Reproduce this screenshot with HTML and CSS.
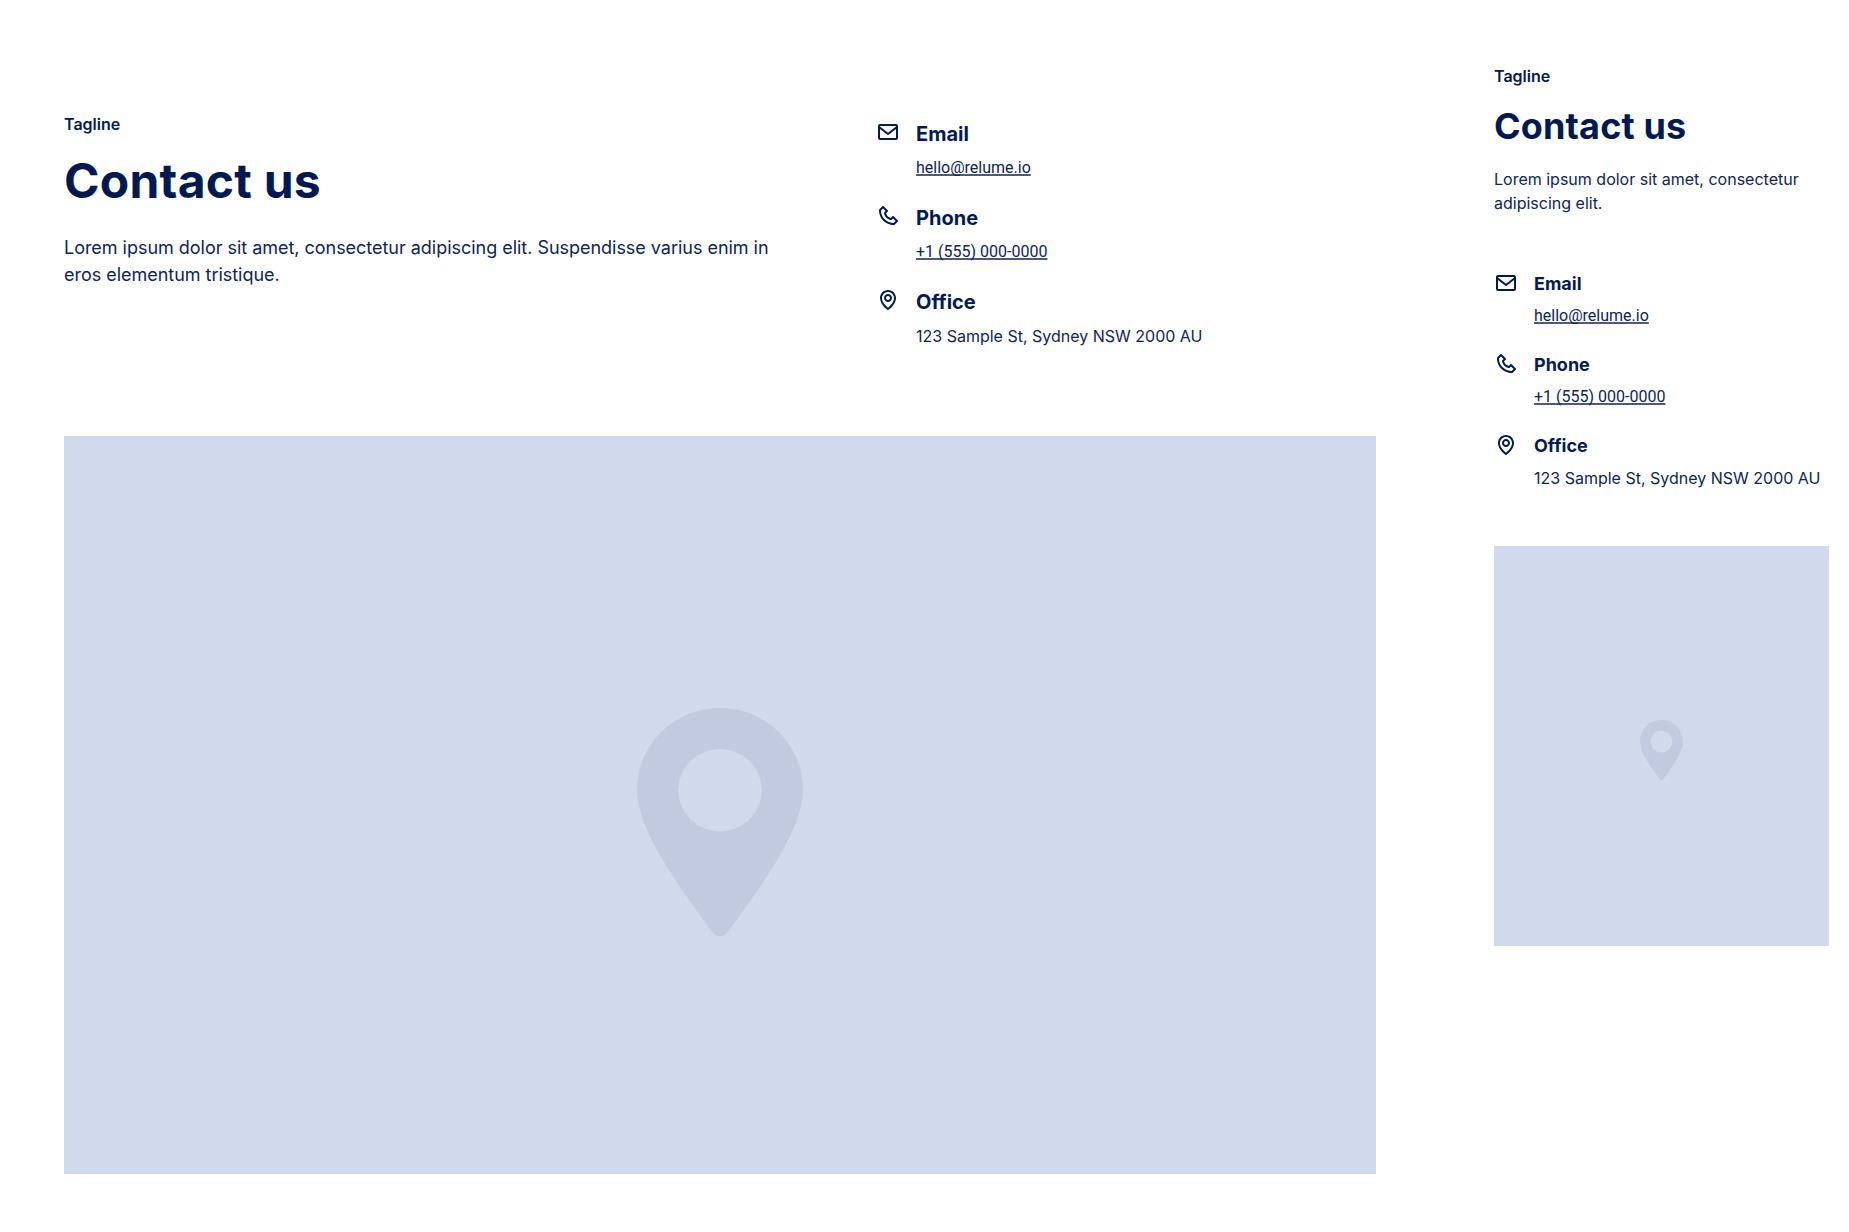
FILE: index.html
```html
<!DOCTYPE html>
<html lang="en">
<head>
<meta charset="utf-8">
<title>Contact us</title>
<link rel="stylesheet" href="styles.css">
</head>
<body>
<svg class="defs" width="0" height="0" aria-hidden="true">
  <symbol id="i-mail" viewBox="0 0 24 24"><path d="M20 4H4c-1.103 0-2 .897-2 2v12c0 1.103.897 2 2 2h16c1.103 0 2-.897 2-2V6c0-1.103-.897-2-2-2zm0 2v.511l-8 6.223-8-6.222V6h16zM4 18V9.044l7.386 5.745a.994.994 0 0 0 1.228 0L20 9.044 20.002 18H4z"/></symbol>
  <symbol id="i-phone" viewBox="0 0 24 24"><path d="M17.707 12.293a.999.999 0 0 0-1.414 0l-1.594 1.594c-.739-.22-2.118-.72-2.992-1.594s-1.374-2.253-1.594-2.992l1.594-1.594a.999.999 0 0 0 0-1.414l-4-4a.999.999 0 0 0-1.414 0L3.581 5.005c-.38.38-.594.902-.586 1.435.023 1.424.4 6.37 4.298 10.268s8.844 4.274 10.269 4.298h.028c.528 0 1.027-.208 1.405-.586l2.712-2.712a.999.999 0 0 0 0-1.414l-4-4.001zm-.127 6.712c-1.248-.021-5.518-.356-8.873-3.712-3.366-3.366-3.692-7.651-3.712-8.874L7 4.414 9.586 7 8.293 8.293a1 1 0 0 0-.272.912c.024.115.611 2.842 2.271 4.502s4.387 2.247 4.502 2.271a.991.991 0 0 0 .912-.271L17 14.414 19.586 17l-2.006 2.005z"/></symbol>
  <symbol id="i-map" viewBox="0 0 24 24"><path d="M12 14c2.206 0 4-1.794 4-4s-1.794-4-4-4-4 1.794-4 4 1.794 4 4 4zm0-6c1.103 0 2 .897 2 2s-.897 2-2 2-2-.897-2-2 .897-2 2-2z"/><path d="M11.42 21.814a.998.998 0 0 0 1.16 0C12.884 21.599 20.029 16.44 20 10c0-4.411-3.589-8-8-8S4 5.589 4 9.995c-.029 6.445 7.116 11.604 7.42 11.819zM12 4c3.309 0 6 2.691 6 6.005.021 4.438-4.388 8.423-6 9.73-1.611-1.308-6.021-5.294-6-9.735 0-3.309 2.691-6 6-6z"/></symbol>
  <symbol id="i-pin" viewBox="0 0 164 228" preserveAspectRatio="none"><path fill-rule="evenodd" d="M82 0C36.7 0 0 36.7 0 82c0 43 50 108 75 142.500 3.500 4.700 10.500 4.700 14 0C114 190 164 125 164 82 164 36.700 127.300 0 82 0zm0 41a41 41 0 1 1 0 82.500 41 41 0 1 1 0-82.500z"/></symbol>
</svg>
<main class="canvas">
  <section class="frame frame-desktop">
    <div class="intro-grid">
      <div class="intro">
        <p class="tagline">Tagline</p>
        <h2 class="title">Contact us</h2>
        <p class="lead">Lorem ipsum dolor sit amet, consectetur adipiscing elit. Suspendisse varius enim in eros elementum tristique.</p>
      </div>
      <ul class="contacts">
        <li class="contact"><svg class="icon"><use href="#i-mail"/></svg><div><h3 class="contact-title">Email</h3><a class="contact-link" href="#">hello@relume.io</a></div></li>
        <li class="contact"><svg class="icon"><use href="#i-phone"/></svg><div><h3 class="contact-title">Phone</h3><a class="contact-link" href="#">+1 (555) 000-0000</a></div></li>
        <li class="contact"><svg class="icon"><use href="#i-map"/></svg><div><h3 class="contact-title">Office</h3><p class="contact-text">123 Sample St, Sydney NSW 2000 AU</p></div></li>
      </ul>
    </div>
    <div class="map"><svg class="pin"><use href="#i-pin"/></svg></div>
  </section>
  <section class="frame frame-mobile">
    <div class="intro">
      <p class="tagline">Tagline</p>
      <h2 class="title">Contact us</h2>
      <p class="lead">Lorem ipsum dolor sit amet, consectetur adipiscing elit.</p>
    </div>
    <ul class="contacts">
      <li class="contact"><svg class="icon"><use href="#i-mail"/></svg><div><h3 class="contact-title">Email</h3><a class="contact-link" href="#">hello@relume.io</a></div></li>
      <li class="contact"><svg class="icon"><use href="#i-phone"/></svg><div><h3 class="contact-title">Phone</h3><a class="contact-link" href="#">+1 (555) 000-0000</a></div></li>
      <li class="contact"><svg class="icon"><use href="#i-map"/></svg><div><h3 class="contact-title">Office</h3><p class="contact-text">123 Sample St, Sydney NSW 2000 AU</p></div></li>
    </ul>
    <div class="map"><svg class="pin"><use href="#i-pin"/></svg></div>
  </section>
</main>
</body>
</html>
```
FILE: styles.css
```css
* { box-sizing: border-box; }
html, body { margin: 0; height: 100%; overflow: hidden; background: #fff; }
body { font-family: Inter, "Liberation Sans", sans-serif; color: #011a4f; }
p, h2, h3, ul { margin: 0; padding: 0; }
ul { list-style: none; }
.defs { position: absolute; }
.canvas { display: flex; align-items: flex-start; gap: 34px; height: 100vh; overflow: hidden; }
.frame { flex: none; }
.frame-desktop { width: 1440px; padding: 112px 64px; }
.frame-mobile { width: 375px; padding: 64px 20px; }
.intro-grid { display: grid; grid-template-columns: 732px 500px; column-gap: 80px; margin-bottom: 80px; }
.tagline { font-size: 16px; line-height: 24px; font-weight: 600; }
.title { font-weight: 700; line-height: 1.2; color: #001a4f; }
.frame-desktop .tagline { margin-bottom: 16px; }
.frame-desktop .title { font-size: 48px; margin-bottom: 24px; letter-spacing: .25px; }
.frame-desktop .lead { font-size: 18px; line-height: 27px; letter-spacing: -.027px; color: #0d2556; }
.frame-mobile .tagline { margin-bottom: 17px; }
.frame-mobile .title { font-size: 36px; margin-bottom: 19px; letter-spacing: .15px; }
.frame-mobile .lead { font-size: 16px; line-height: 24px; margin-bottom: 47.6px; color: #0d2556; }
.contacts { display: grid; row-gap: 24px; padding: 8px 0; }
.frame-mobile .contacts { margin-bottom: 47.4px; }
.contact { display: flex; gap: 16px; align-items: flex-start; }
.icon { flex: none; width: 24px; height: 24px; fill: currentColor; }
.contact-title { font-weight: 700; line-height: 1.4; margin-bottom: 8px; }
.frame-desktop .contact-title { font-size: 20px; }
.frame-mobile .contact-title { font-size: 18px; }
.contact-link, .contact-text { display: block; font-size: 16px; line-height: 24px; color: #0d2556; }
.contact-link { font-family: Roboto, "Liberation Sans", sans-serif; text-decoration: underline; text-decoration-color: #4a5a80; text-decoration-thickness: 1.5px; text-decoration-skip-ink: none; }
.map { background: #d1d9ec; display: flex; align-items: center; justify-content: center; }
.frame-desktop .map { height: 738px; padding-top: 34px; }
.frame-mobile .map { height: 400px; padding-top: 9px; }
.pin { fill: #c1cadf; }
.frame-desktop .pin { width: 166px; height: 228px; }
.frame-mobile .pin { width: 43px; height: 60px; }
```
